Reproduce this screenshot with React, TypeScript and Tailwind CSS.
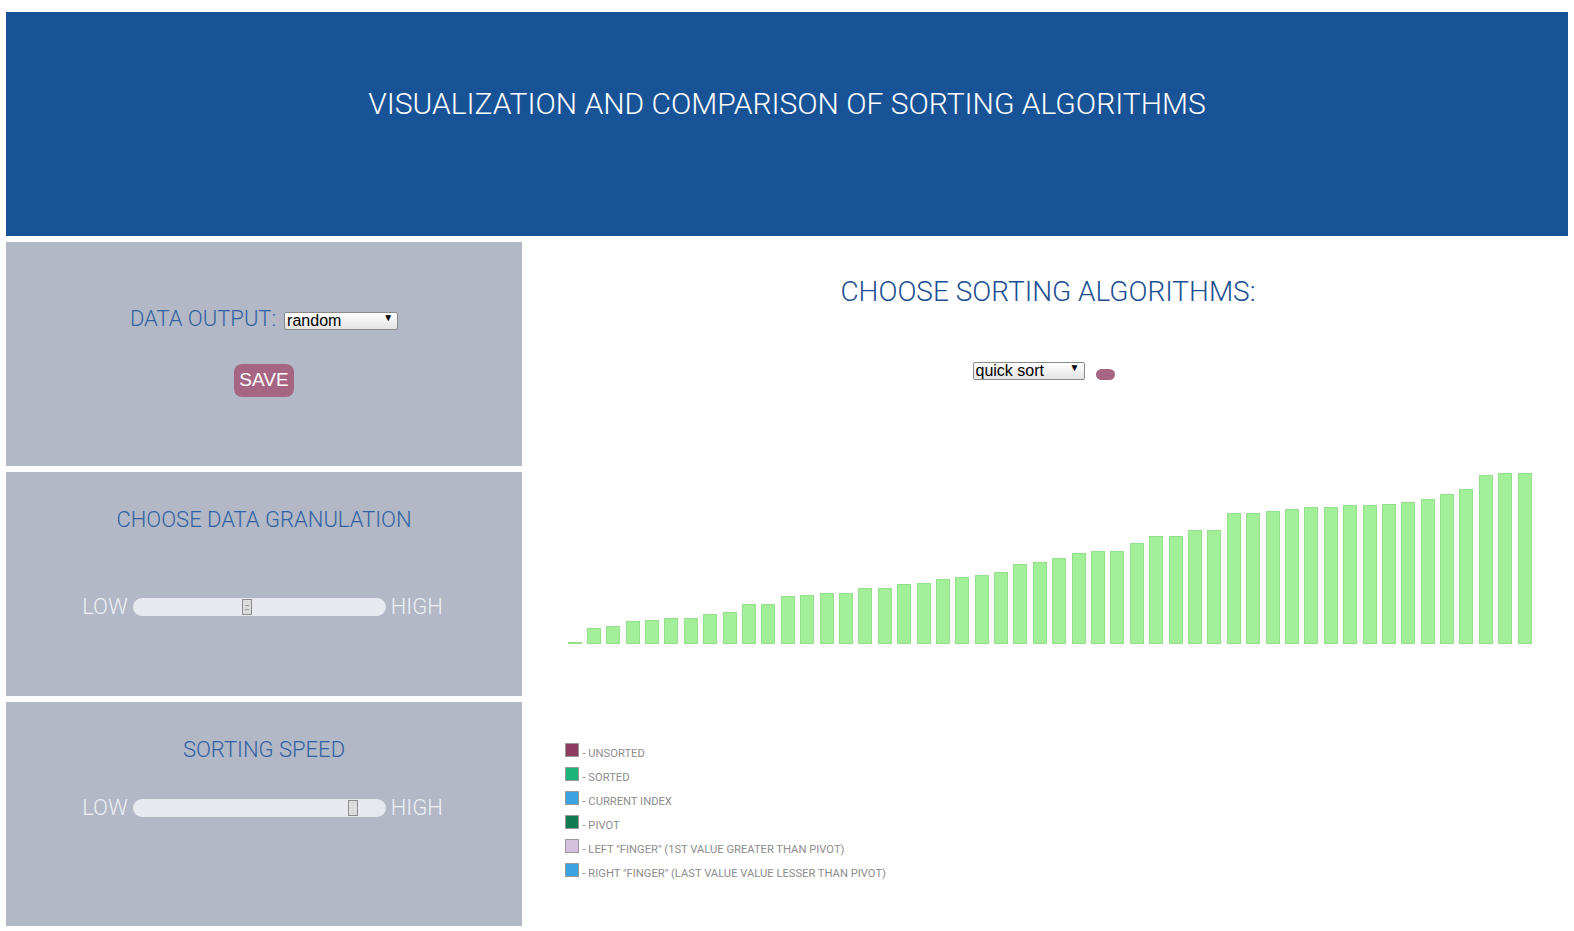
const bars = [
  2, 16, 18, 23, 24, 26, 26, 30, 32, 40, 40, 48, 49, 51, 51, 56, 56,
  60, 61, 65, 67, 69, 72, 80, 82, 86, 91, 93, 93, 101, 108, 108, 114, 114,
  131, 131, 133, 135, 137, 137, 139, 139, 140, 142, 145, 150, 155, 169, 171, 171,
]

const legend = [
  { color: "bg-[#8e3b5f]", label: "- UNSORTED" },
  { color: "bg-[#1cb47a]", label: "- SORTED" },
  { color: "bg-[#3ba4e0]", label: "- CURRENT INDEX" },
  { color: "bg-[#127a52]", label: "- PIVOT" },
  { color: "bg-[#d5c0df]", label: '- LEFT "FINGER" (1ST VALUE GREATER THAN PIVOT)' },
  { color: "bg-[#3ba4e0]", label: '- RIGHT "FINGER" (LAST VALUE VALUE LESSER THAN PIVOT)' },
]

function Select({ value, width }: { value: string; width: string }) {
  return (
    <div className={`relative h-[18px] ${width}`}>
      <select
        defaultValue={value}
        className="appearance-none w-full h-full border border-[#8a8a8a] rounded-[2px] bg-gradient-to-b from-white to-[#e4e4e4] text-[16px] leading-[16px] pl-[2px] text-black font-['Liberation_Sans',Arial,sans-serif]"
      >
        <option value={value}>{value}</option>
      </select>
      {/* dropdown arrow */}
      <span className="absolute right-[5px] top-[3px] text-[10px] leading-[12px] text-black pointer-events-none">
        ▼
      </span>
    </div>
  )
}

function Slider({ thumb, lines }: { thumb: string; lines?: boolean }) {
  return (
    <div className="flex items-center gap-[5px]">
      <span className="text-[22px] leading-[28px] font-light text-[#eef0f5]">LOW</span>
      <div className="relative w-[253px] h-[18px] rounded-full bg-[#e7e9ee]">
        <div
          className={`absolute top-[1px] w-[10px] h-[16px] border border-[#8c8c8c] bg-[#dcdcdc] flex flex-col items-center justify-center gap-[3px] ${thumb}`}
        >
          {lines && (
            <>
              <span className="block w-[4px] h-px bg-[#999]" />
              <span className="block w-[4px] h-px bg-[#999]" />
            </>
          )}
        </div>
      </div>
      <span className="text-[22px] leading-[28px] font-light text-[#eef0f5]">HIGH</span>
    </div>
  )
}

export default function App() {
  return (
    <div className="min-h-screen bg-white px-[6px] pt-[12px] font-['Roboto','Open_Sans',sans-serif]">
      {/* Header */}
      <header className="h-[224px] bg-[#195397] flex justify-center pt-[74px]">
        <h1 className="text-[30px] leading-[36px] font-light text-white">
          VISUALIZATION AND COMPARISON OF SORTING ALGORITHMS
        </h1>
      </header>

      <div className="flex gap-[6px] mt-[6px]">
        {/* Left column */}
        <div className="w-[516px] flex flex-col gap-[6px]">
          <section className="h-[224px] bg-[#b2b8c6] flex flex-col items-center pt-[63px]">
            <div className="flex items-center gap-[8px] h-[28px]">
              <span className="text-[22px] leading-[28px] font-light text-[#3162a3]">DATA OUTPUT:</span>
              <Select value="random" width="w-[114px] -mt-[2px]" />
            </div>
            <button className="mt-[31px] w-[60px] h-[33px] rounded-[8px] bg-[#a66583] text-white text-[19px] font-['Liberation_Sans',Arial,sans-serif]">
              SAVE
            </button>
          </section>

          <section className="h-[224px] bg-[#b2b8c6] flex flex-col items-center pt-[34px]">
            <h2 className="text-[22px] leading-[28px] font-light text-[#3162a3]">CHOOSE DATA GRANULATION</h2>
            <div className="mt-[59px] -ml-[3px]">
              <Slider thumb="left-[109px]" lines />
            </div>
          </section>

          <section className="h-[224px] bg-[#b2b8c6] flex flex-col items-center pt-[34px]">
            <h2 className="text-[22px] leading-[28px] font-light text-[#3162a3]">SORTING SPEED</h2>
            <div className="mt-[30px] -ml-[3px]">
              <Slider thumb="left-[215px]" />
            </div>
          </section>
        </div>

        {/* Right column */}
        <div className="flex-1 flex flex-col items-center pt-[32px]">
          <h2 className="text-[28px] leading-[36px] font-light text-[#1b4f91]">
            CHOOSE SORTING ALGORITHMS:
          </h2>
          <div className="mt-[49px] -ml-[9px] flex items-start gap-[11px]">
            <Select value="quick sort" width="w-[112px]" />
            <button className="mt-[10px] w-[19px] h-[11px] rounded-full bg-[#a66583]" />
          </div>

          <div className="w-[965px] mt-[84px] ml-[4px]">
            {/* Chart */}
            <div className="h-[180px] flex items-end gap-[5.4px]">
              {bars.map((h, i) => (
                <div
                  key={i}
                  className="w-[14px] shrink-0 bg-[#a1ef98] border border-[#92e08a]"
                  style={{ height: h }}
                />
              ))}
            </div>

            {/* Legend */}
            <div className="mt-[99px] -ml-[3px] flex flex-col gap-[10px]">
              {legend.map((item) => (
                <div key={item.label} className="flex items-end gap-[4px] h-[14px]">
                  <span className={`block w-[14px] h-[14px] border border-[#999] ${item.color}`} />
                  <span className="text-[11.2px] leading-[11px] text-[#8d8d8d] translate-y-[2px]">
                    {item.label}
                  </span>
                </div>
              ))}
            </div>
          </div>
        </div>
      </div>
    </div>
  )
}
